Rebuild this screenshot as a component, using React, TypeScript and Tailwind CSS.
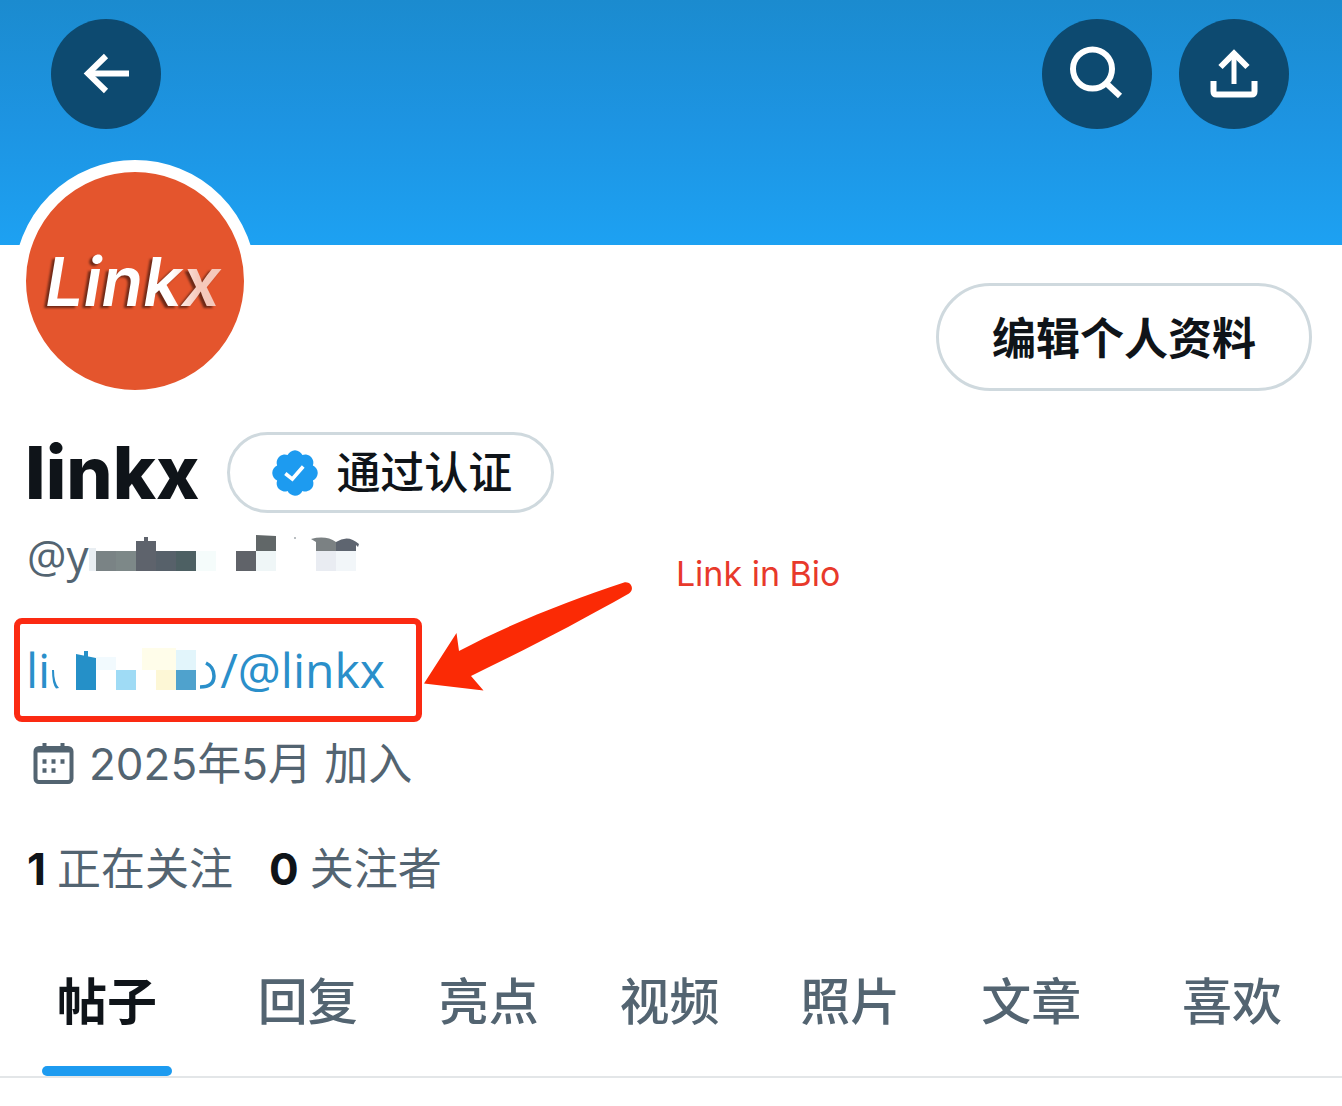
import React from "react";

function BackIcon() {
  return (
    <svg viewBox="0 0 110 110" className="size-full" fill="none" stroke="#fff" strokeWidth="6" aria-hidden="true">
      <path d="M78 54.500H36" />
      <path d="M55 37L37 54.500L55 72" />
    </svg>
  );
}

function SearchIcon() {
  return (
    <svg viewBox="0 0 110 110" className="size-full" fill="none" stroke="#fff" strokeWidth="6" aria-hidden="true">
      <circle cx="50.500" cy="50" r="19.500" />
      <path d="M64 64L78 77" />
    </svg>
  );
}

function ShareIcon() {
  return (
    <svg viewBox="0 0 110 110" className="size-full" fill="none" stroke="#fff" strokeWidth="6" aria-hidden="true">
      <path d="M55 65V36" strokeWidth="5" />
      <path d="M41.500 48L55 34.500L68.500 48" />
      <path d="M34.500 62V72.500Q34.500 75.500 37.500 75.500H72.500Q75.500 75.500 75.500 72.500V62" />
    </svg>
  );
}

function VerifiedIcon() {
  return (
    <svg viewBox="1.500 1.500 19 19" className="size-[46px]" aria-hidden="true">
      <path
        fill="#1d9bf0"
        d="M20.396 11c-.018-.646-.215-1.275-.57-1.816-.354-.54-.852-.972-1.438-1.246.223-.607.27-1.264.14-1.897-.131-.634-.437-1.218-.882-1.687-.47-.445-1.053-.75-1.687-.882-.633-.13-1.29-.083-1.897.14-.273-.587-.704-1.086-1.245-1.44S11.647 1.62 11 1.604c-.646.017-1.273.213-1.813.568s-.969.854-1.24 1.44c-.608-.223-1.267-.272-1.902-.14-.635.13-1.22.436-1.69.882-.445.47-.749 1.055-.878 1.688-.13.633-.08 1.29.144 1.896-.587.274-1.087.705-1.443 1.245-.356.54-.555 1.17-.574 1.817.02.647.218 1.276.574 1.817.356.54.856.972 1.443 1.245-.224.606-.274 1.263-.144 1.896.13.634.433 1.218.877 1.688.47.443 1.054.747 1.687.878.633.132 1.29.084 1.897-.136.274.586.705 1.084 1.246 1.439.54.354 1.17.551 1.816.569.647-.016 1.276-.213 1.817-.567s.972-.854 1.245-1.44c.604.239 1.266.296 1.903.164.636-.132 1.22-.447 1.68-.907.46-.46.776-1.044.908-1.681s.075-1.299-.165-1.903c.586-.274 1.084-.705 1.439-1.246.354-.54.551-1.17.569-1.816z"
      />
      <path fill="none" stroke="#fff" strokeWidth="1.500" d="M7 11.200L9.900 13.500L14.400 8.300" />
    </svg>
  );
}

function CalendarIcon() {
  return (
    <svg viewBox="0 0 42 44" className="h-[44px] w-[42px]" aria-hidden="true">
      <rect x="2.500" y="6" width="36" height="34" rx="3.500" fill="none" stroke="#536471" strokeWidth="4" />
      <path d="M4 8.500H37" stroke="#536471" strokeWidth="4" />
      <path d="M11.500 1V9.500M29.500 1V9.500" stroke="#536471" strokeWidth="4" />
      <path d="M9.500 19.500h4M18.500 19.500h4M27.500 19.500h4M9.500 28.500h4M18.500 28.500h4" stroke="#536471" strokeWidth="4.500" />
    </svg>
  );
}

function HandleMosaic() {
  return (
    <svg viewBox="89 530 273 48" className="h-[48px] w-[273px]" aria-hidden="true">
      <rect x="89" y="547" width="7" height="23" fill="#dfe7ed" opacity="0.7" />
      <rect x="96" y="550" width="20" height="20" fill="#7a8385" />
      <rect x="116" y="550" width="20" height="20" fill="#7d8888" />
      <rect x="136" y="540" width="20" height="30" fill="#5e636c" />
      <rect x="144" y="536" width="4" height="5" fill="#5e636c" />
      <rect x="156" y="550" width="20" height="20" fill="#57616a" />
      <rect x="176" y="550" width="20" height="20" fill="#4d6063" />
      <rect x="196" y="550" width="20" height="20" fill="#f5fcfb" />
      <rect x="236" y="550" width="20" height="20" fill="#606369" />
      <path d="M256 534L276 535V550H256Z" fill="#616768" />
      <rect x="256" y="550" width="20" height="20" fill="#eff6f7" />
      <circle cx="295" cy="537" r="1" fill="#a3aaae" />
      <path d="M311 538Q326 534 336 541V550H316V541Z" fill="#7b8183" />
      <path d="M336 541Q348 533 359 543L358 546L356 544V550H336Z" fill="#5e6570" />
      <rect x="316" y="550" width="20" height="20" fill="#e9ecf2" />
      <rect x="336" y="550" width="20" height="20" fill="#f2f6f9" />
    </svg>
  );
}

function LinkMosaic() {
  return (
    <svg viewBox="50 640 170 60" className="h-[60px] w-[170px]" aria-hidden="true">
      <path d="M54 670Q54 683 59 688L56 688.500Q52 684 52 670Z" fill="#2a8fca" />
      <path d="M76 654L96 658V690H76Z" fill="#2590c8" />
      <rect x="84" y="651" width="4" height="7" fill="#2590c8" />
      <rect x="96" y="657" width="20" height="13" fill="#f2fafe" />
      <rect x="116" y="670" width="20" height="20" fill="#9fdbf5" />
      <rect x="142" y="648" width="34" height="22" fill="#fffdea" />
      <rect x="156" y="670" width="20" height="20" fill="#fdf7d6" />
      <rect x="176" y="650" width="20" height="20" fill="#e2f5fb" />
      <rect x="176" y="670" width="20" height="20" fill="#4fa2cd" />
      <path d="M206 663Q214 667 214 676Q214 687 200 687" fill="none" stroke="#2a8fca" strokeWidth="3.500" />
    </svg>
  );
}

function Arrow() {
  return (
    <svg viewBox="424 580 210 112" className="absolute -top-11 left-full ml-2 h-[112px] w-[210px]" aria-hidden="true">
      <path
        fill="#fb2a05"
        d="M424 683.500L456.500 633L459 651C510 624 570 600 624 582.500C631 581 635 589 629 593.500C575 624 525 650 471 676L483.500 690.500Z"
      />
    </svg>
  );
}

const roundButton = "size-[110px] rounded-full bg-[#0d4a70]";
const tabs = ["帖子", "回复", "亮点", "视频", "照片", "文章", "喜欢"];

export default function App() {
  return (
    <main className="min-h-screen bg-white font-['Inter','Noto_Sans_CJK_SC',sans-serif] text-[44px] leading-[56px] text-[#536471]">
      <header className="flex h-[245px] items-start justify-between bg-linear-to-b from-[#1b8bcf] via-[#1d94e2] to-[#1da1f2] pt-[19px] pr-[53px] pl-[51px]">
        <button type="button" aria-label="返回" className={roundButton}>
          <BackIcon />
        </button>
        <div className="flex gap-[27px]">
          <button type="button" aria-label="搜索" className={roundButton}>
            <SearchIcon />
          </button>
          <button type="button" aria-label="分享" className={roundButton}>
            <ShareIcon />
          </button>
        </div>
      </header>

      <section>
        <div className="-mt-[85px] flex items-start justify-between pr-[30px] pl-[14px]">
          <div className="flex size-[242px] items-center justify-center rounded-full border-12 border-white bg-[#e4552d]">
            <span className="bg-linear-to-r from-white from-70% to-[#f5c8bb] to-85% bg-clip-text pr-1 font-['Inter',sans-serif] text-[68px] leading-[84px] font-semibold text-transparent italic drop-shadow-[-3px_2px_1px_rgba(70,25,15,0.75)]">
              Linkx
            </span>
          </div>
          <button
            type="button"
            className="mt-[123px] h-[108px] rounded-full border-3 border-[#cfd9de] px-[53px] pt-1 font-bold text-[#0f1419]"
          >
            编辑个人资料
          </button>
        </div>

        <div className="mt-[30px] flex items-center gap-7 pl-[25px]">
          <h1 className="font-['Inter',sans-serif] text-[73px] leading-[80px] font-extrabold text-[#0f1419]">linkx</h1>
          <button
            type="button"
            className="flex h-[81px] items-center gap-[18px] rounded-full border-3 border-[#cfd9de] pr-[39px] pl-[42px] font-medium text-[#0f1419]"
          >
            <VerifiedIcon />
            通过认证
          </button>
        </div>

        <p className="mt-[14px] flex items-center pl-[27px] font-['Open_Sans',sans-serif]">
          @y
          <HandleMosaic />
        </p>

        <div className="relative mt-[35px] ml-[14px] w-fit rounded-lg border-6 border-[#fb2a12] pr-[31px] pl-[6px]">
          <a
            href="#linkx"
            className="flex h-[92px] items-center font-['Open_Sans',sans-serif] text-[48px] text-[#2a8fca]"
          >
            li
            <LinkMosaic />
            /@linkx
          </a>
          <Arrow />
          <span className="absolute -top-[78px] left-full ml-[260px] text-[34px] whitespace-nowrap text-[#e8392b]">
            Link in Bio
          </span>
        </div>

        <p className="mt-[14px] flex items-center gap-[14px] pl-[33px]">
          <CalendarIcon />
          <span>2025年5月 加入</span>
        </p>

        <div className="mt-[49px] flex gap-9 pl-[27px]">
          <a href="#following" className="flex gap-[11px]">
            <strong className="font-bold text-[#0f1419]">1</strong>正在关注
          </a>
          <a href="#followers" className="flex gap-[11px]">
            <strong className="font-bold text-[#0f1419]">0</strong>关注者
          </a>
        </div>
      </section>

      <nav className="mt-[57px] flex justify-between border-b-2 border-[#e3e6e8] pr-[60px] pl-[57px] text-[50px] font-medium">
        {tabs.map((tab, index) => (
          <button
            key={tab}
            type="button"
            aria-current={index === 0 ? "page" : undefined}
            className="relative pt-5 pb-[46px] first:mr-5 first:font-bold first:text-[#0f1419] last:ml-5"
          >
            {tab}
            {index === 0 && (
              <span className="absolute bottom-0 left-1/2 h-[10px] w-[130px] -translate-x-1/2 rounded-full bg-[#1d9bf0]" />
            )}
          </button>
        ))}
      </nav>
    </main>
  );
}
